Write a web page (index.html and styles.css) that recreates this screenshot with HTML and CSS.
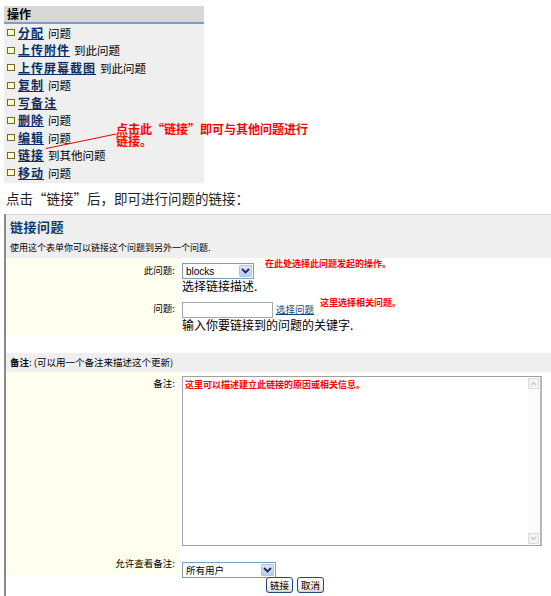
FILE: index.html
```html
<!DOCTYPE html>
<html>
<head>
<meta charset="utf-8">
<title>链接问题</title>
<link rel="stylesheet" href="styles.css">
</head>
<body>
<div class="top">
  <div class="ops">
    <div class="ops-head">操作</div>
    <ul class="ops-list">
      <li><span class="box"></span><a href="#">分配</a><span>问题</span></li>
      <li><span class="box"></span><a href="#">上传附件</a><span>到此问题</span></li>
      <li><span class="box"></span><a href="#">上传屏幕截图</a><span>到此问题</span></li>
      <li><span class="box"></span><a href="#">复制</a><span>问题</span></li>
      <li><span class="box"></span><a href="#">写备注</a></li>
      <li><span class="box"></span><a href="#">删除</a><span>问题</span></li>
      <li><span class="box"></span><a href="#">编辑</a><span>问题</span></li>
      <li><span class="box"></span><a href="#">链接</a><span>到其他问题</span></li>
      <li><span class="box"></span><a href="#">移动</a><span>问题</span></li>
    </ul>
  </div>
  <div class="note">点击此“链接”即可与其他问题进行<br>链接。</div>
  <svg class="pointer" width="200" height="182" viewBox="0 0 200 182"><line x1="46" y1="148.5" x2="116" y2="134" stroke="#ff0000" stroke-width="1"/></svg>
</div>
<p class="intro">点击“链接”后，即可进行问题的链接：</p>
<div class="form">
  <div class="form-head">
    <div class="title">链接问题</div>
    <div class="desc">使用这个表单你可以链接这个问题到另外一个问题.</div>
  </div>
  <div class="row r1">
    <div class="lbl">此问题:</div>
    <div class="fld">
      <div class="line">
        <span class="select s1"><span class="val latin">blocks</span><span class="arrow"><svg width="9" height="6" viewBox="0 0 9 6"><path d="M1 1 L4.5 4.5 L8 1" fill="none" stroke="#1d2a4a" stroke-width="1.8"/></svg></span></span>
        <span class="hint h1">在此处选择此问题发起的操作。</span>
      </div>
      <div class="help">选择链接描述.</div>
    </div>
  </div>
  <div class="row r2">
    <div class="lbl">问题:</div>
    <div class="fld">
      <div class="line">
        <span class="input"></span>
        <a class="pick" href="#">选择问题</a>
        <span class="hint h2">这里选择相关问题。</span>
      </div>
      <div class="help">输入你要链接到的问题的关键字.</div>
    </div>
  </div>
  <div class="spacer"></div>
  <div class="section"><b>备注</b>: (可以用一个备注来描述这个更新)</div>
  <div class="row r3">
    <div class="lbl">备注:</div>
    <div class="fld">
      <div class="ta">
        <div class="ta-text">这里可以描述建立此链接的原因或相关信息。</div>
        <div class="sb">
          <span class="sb-btn"><svg width="7" height="5" viewBox="0 0 7 5"><path d="M1 4 L3.5 1.5 L6 4" fill="none" stroke="#c4c4c4" stroke-width="1.2"/></svg></span>
          <span class="sb-btn"><svg width="7" height="5" viewBox="0 0 7 5"><path d="M1 1 L3.5 3.5 L6 1" fill="none" stroke="#c4c4c4" stroke-width="1.2"/></svg></span>
        </div>
      </div>
    </div>
  </div>
  <div class="row r4">
    <div class="lbl">允许查看备注:</div>
    <div class="fld">
      <span class="select s2"><span class="val">所有用户</span><span class="arrow"><svg width="9" height="6" viewBox="0 0 9 6"><path d="M1 1 L4.5 4.5 L8 1" fill="none" stroke="#1d2a4a" stroke-width="1.8"/></svg></span></span>
    </div>
  </div>
  <div class="buttons">
    <button class="btn" type="button">链接</button>
    <button class="btn" type="button">取消</button>
  </div>
</div>
</body>
</html>
```
FILE: styles.css
```css
* { box-sizing: border-box; }
html, body { margin: 0; padding: 0; }
body {
  width: 551px;
  height: 596px;
  overflow: hidden;
  background: #ffffff;
  color: #000;
  font-family: "Noto Sans CJK SC", "Noto Sans", sans-serif;
}
.latin { font-family: "Liberation Sans", "Noto Sans CJK SC", sans-serif; }

/* top operations panel */
.top { position: relative; height: 182px; padding: 6px 0 0 4px; }
.ops { width: 200px; background: #efefef; padding-bottom: 1px; }
.ops-head {
  height: 18px;
  background: #d8d8d8;
  border-bottom: 2px solid #7d9ec0;
  font-size: 12px;
  font-weight: bold;
  line-height: 16px;
  padding-left: 3px;
}
.ops-list { list-style: none; margin: 0; padding: 0 0 0 3px; }
.ops-list li {
  height: 17.5px;
  display: flex;
  align-items: center;
  font-size: 11.5px;
  line-height: 14px;
}
.box {
  width: 8px;
  height: 7px;
  border: 1px solid #6e6a2c;
  background: #ffffc6;
  margin-right: 3px;
}
.ops-list a {
  color: #0c2e62;
  font-weight: bold;
  font-size: 12px;
  letter-spacing: 1px;
  text-decoration: underline;
  margin-right: 4px;
}
.note {
  position: absolute;
  left: 116px;
  top: 123px;
  color: #ff0000;
  font-size: 12px;
  font-weight: bold;
  line-height: 12px;
  white-space: nowrap;
}
.pointer { position: absolute; left: 0; top: 0; }

.intro {
  margin: 8px 0 0 6px;
  font-size: 13.5px;
  line-height: 16px;
  color: #222;
}

/* form */
.form {
  margin: 8px 0 0 4px;
  border-left: 2px solid #8a8a8a;
  height: 400px;
}
.form-head {
  background: #efefef;
  border-top: 1px solid #d6d6d6;
  height: 44px;
  padding: 4px 0 0 4px;
}
.title {
  font-size: 13px;
  font-weight: bold;
  color: #0e3a70;
  line-height: 16px;
  letter-spacing: 0.5px;
}
.desc {
  margin-top: 7px;
  font-size: 9px;
  line-height: 12px;
}
.row { display: grid; grid-template-columns: 173px 1fr; }
.lbl {
  background: #fffff0;
  text-align: right;
  padding: 6px 4px 0 0;
  font-size: 9.5px;
  line-height: 12px;
}
.r1 .lbl { padding-top: 6px; }
.fld { padding-left: 3px; }
.r1 .fld { padding-top: 5px; height: 38px; }
.r2 .fld { padding-top: 6px; height: 38px; }
.r3 .fld { padding-top: 4px; height: 179px; }
.r4 .fld { padding-top: 4px; height: 24px; }
.r3 .lbl { padding-top: 5px; }
.r4 .lbl { padding-top: 6px; }
.line { display: flex; align-items: flex-start; height: 16px; }
.help { font-size: 12px; line-height: 14px; }

.select {
  display: inline-flex;
  align-items: center;
  justify-content: space-between;
  height: 16px;
  border: 1px solid #7f9db9;
  background: #fff;
  padding: 0 1px 0 3px;
  font-size: 10px;
}
.s1 { width: 72px; }
.s2 { width: 94px; font-size: 9.5px; }
.arrow {
  width: 13px;
  height: 12px;
  background: linear-gradient(#dbe5fb, #b9cbf3);
  border: 1px solid #b3c4e8;
  border-radius: 1px;
  display: flex;
  align-items: center;
  justify-content: center;
}
.hint {
  color: #ff0000;
  font-size: 9px;
  font-weight: bold;
  line-height: 10px;
  margin-top: -4px;
  white-space: nowrap;
}
.h1 { margin-left: 11px; }
.h2 { margin-left: 6px; }
.input {
  width: 91px;
  height: 16px;
  border: 1px solid #a2a9b0;
  background: #fff;
}
.pick {
  margin-left: 3px;
  font-size: 9.5px;
  line-height: 15px;
  color: #173d70;
  text-decoration: underline;
}
.spacer { height: 19px; }
.section {
  background: #efefef;
  height: 19px;
  line-height: 19px;
  font-size: 9.5px;
  padding-left: 4px;
}
.ta {
  display: flex;
  width: 360px;
  height: 170px;
  border: 1px solid #a0a0a0;
  border-right: 2px solid #b8b8b8;
  background: #fff;
}
.ta-text {
  flex: 1;
  color: #ff0000;
  font-size: 9px;
  font-weight: bold;
  line-height: 12px;
  padding: 2px 2px;
}
.sb {
  width: 12px;
  display: flex;
  flex-direction: column;
  justify-content: space-between;
  padding: 1px 0;
  background: #fbfbfb;
}
.sb-btn {
  width: 11px;
  height: 11px;
  border: 1px solid #dcdcdc;
  background: #f4f4f4;
  display: flex;
  align-items: center;
  justify-content: center;
}
.buttons {
  display: flex;
  gap: 4px;
  padding: 2px 0 0 260px;
}
.btn {
  height: 16px;
  padding: 0 3px;
  margin: 0;
  font-family: "Noto Sans CJK SC", sans-serif;
  font-size: 9.5px;
  line-height: 12px;
  color: #000;
  border: 1px solid #1c4a86;
  border-radius: 3px;
  background: linear-gradient(#ffffff, #ecebe6 80%, #d6d0c5);
}
```
